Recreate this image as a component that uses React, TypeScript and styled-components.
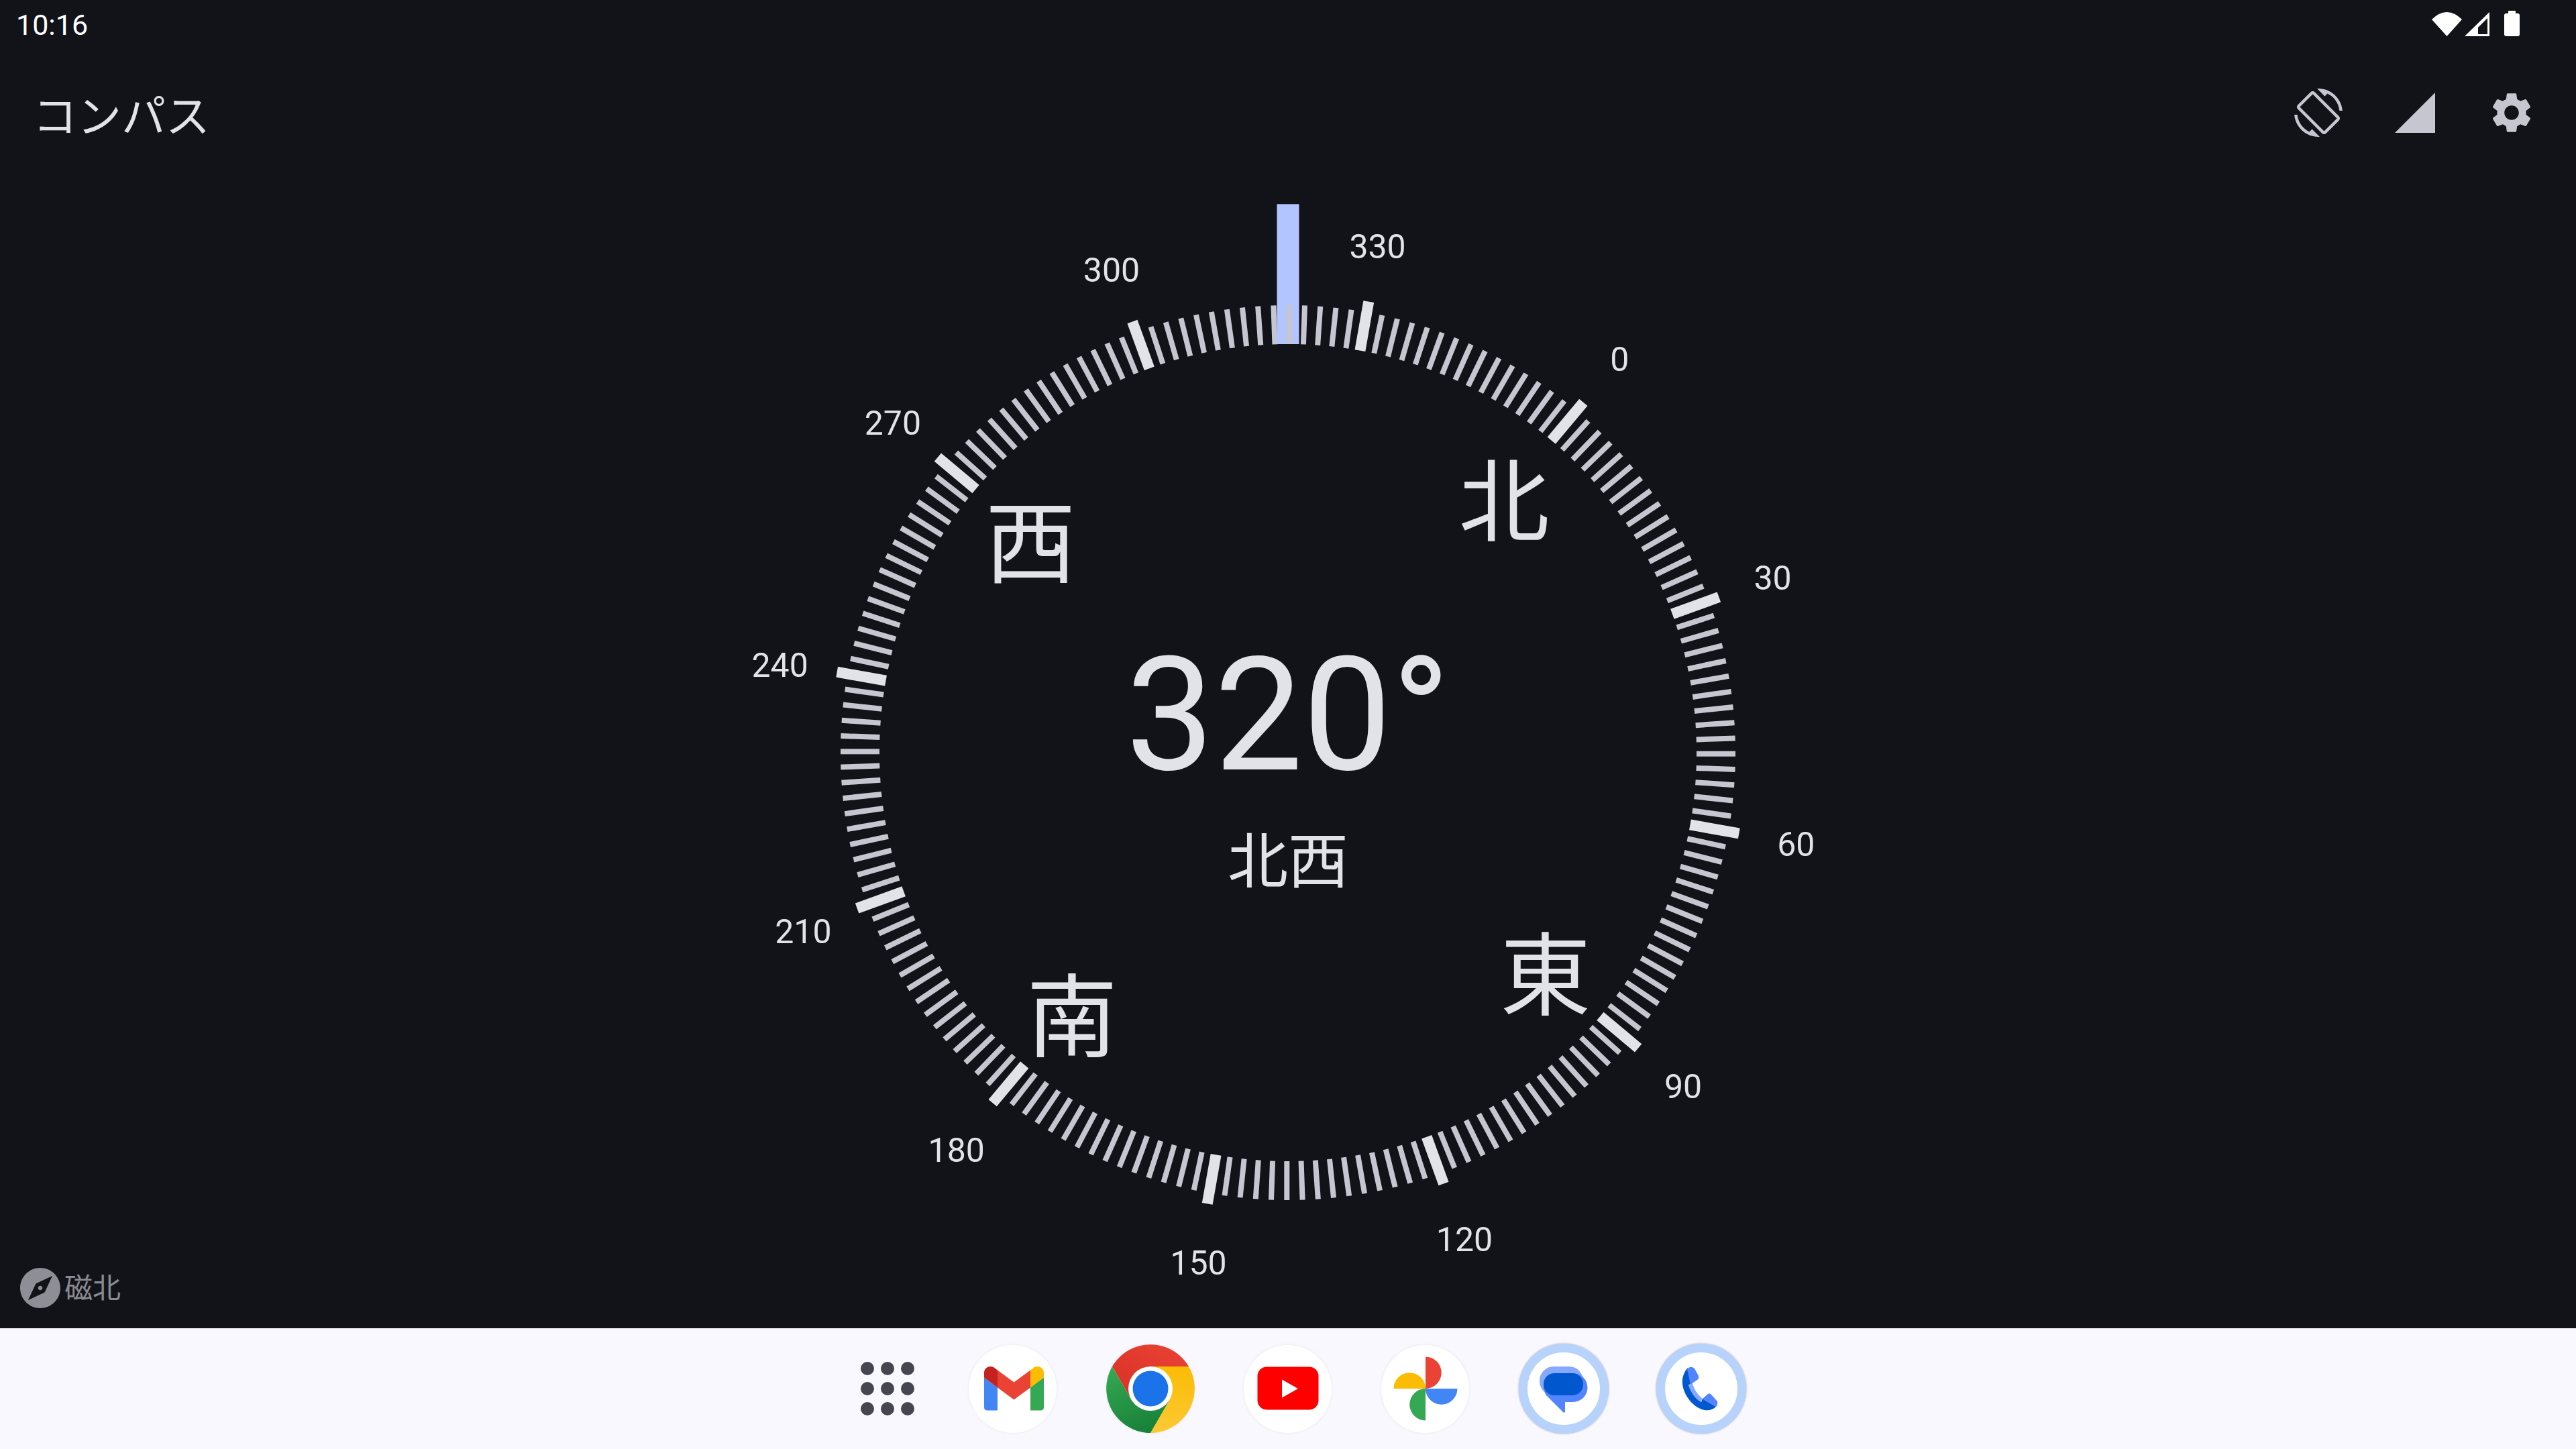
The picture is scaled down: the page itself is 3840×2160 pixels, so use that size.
import React from 'react';
import styled, { createGlobalStyle } from 'styled-components';

const HEADING = 320;
const DIAL_SIZE = 1692;
const CENTER = DIAL_SIZE / 2;
const INNER_R = 609;
const LABEL_R = 769;
const LABEL_DROP = 3.5;
const CARDINAL_R = 501;

const ticks = Array.from({ length: 180 }, (_, i) => i * 2);
const degreeMarks = Array.from({ length: 12 }, (_, i) => i * 30);
const cardinals = [
    { name: '北', deg: 0 },
    { name: '東', deg: 90 },
    { name: '南', deg: 180 },
    { name: '西', deg: 270 },
];

const polar = (deg: number, r: number) => {
    const rad = ((deg - HEADING) * Math.PI) / 180;
    return { x: CENTER + Math.sin(rad) * r, y: CENTER - Math.cos(rad) * r };
};

const Tick = ({ deg }: { deg: number }) => {
    const major = deg % 30 === 0;
    const length = major ? 74 : 58;
    const width = major ? 16 : 8;
    return (
        <rect
            x={CENTER + 1.7 - width / 2}
            y={CENTER - INNER_R - length}
            width={width}
            height={length}
            fill={major ? '#e2e2e9' : '#c5c6d0'}
            transform={`rotate(${deg - HEADING} ${CENTER} ${CENTER})`}
        />
    );
};

const DialDrawing = () => (
    <DialSvg viewBox={`0 0 ${DIAL_SIZE} ${DIAL_SIZE}`}>
        {ticks.filter((deg) => deg !== HEADING).map((deg) => (
            <Tick key={deg} deg={deg} />
        ))}
        <rect x={CENTER - 16.5} y={CENTER - 817.7} width={33} height={208.7} fill="#b3c5ff" />
        <Tick deg={HEADING} />
    </DialSvg>
);

const GmailLogo = () => (
    <svg width="131" height="131" viewBox="0 0 131 131">
        <path d="M22.5 49L42.5 64V98H27.5Q22.5 98 22.5 93Z" fill="#4285f4" />
        <path d="M22.5 49V42C22.5 33 33 30 38.5 35L42.5 38V64Z" fill="#c5221f" />
        <path d="M42.5 38L67 56L91.5 38V64L67 82L42.5 64Z" fill="#ea4335" />
        <path d="M91.5 38L95.5 35C101 30 111.5 33 111.5 42V49L91.5 64Z" fill="#fbbc04" />
        <path d="M91.5 64L111.5 49V93Q111.5 98 106.5 98H91.5Z" fill="#34a853" />
    </svg>
);

const ChromeLogo = () => (
    <svg width="132" height="132" viewBox="0 0 132 132">
        <defs>
            <linearGradient id="chromeRed" x1="0" y1="1" x2="1" y2="0">
                <stop offset="0" stopColor="#d93025" />
                <stop offset="1" stopColor="#ea4335" />
            </linearGradient>
            <linearGradient id="chromeGreen" x1="0.2" y1="0" x2="0.6" y2="1">
                <stop offset="0" stopColor="#34a853" />
                <stop offset="1" stopColor="#188038" />
            </linearGradient>
            <linearGradient id="chromeYellow" x1="0.5" y1="0" x2="0.5" y2="1">
                <stop offset="0" stopColor="#fbbc04" />
                <stop offset="1" stopColor="#fcc934" />
            </linearGradient>
        </defs>
        <path d="M9 33A66 66 0 0 1 123 33H66L37.4 82.5Z" fill="url(#chromeRed)" />
        <path d="M66 33H123A66 66 0 0 1 66 132L94.6 82.5Z" fill="url(#chromeYellow)" />
        <path d="M9 33L37.4 82.5H94.6L66 132A66 66 0 0 1 9 33Z" fill="url(#chromeGreen)" />
        <circle cx="66" cy="66" r="33" fill="#fff" />
        <circle cx="66" cy="66" r="26.5" fill="#1a73e8" />
    </svg>
);

const YoutubeLogo = () => (
    <svg width="131" height="131" viewBox="0 0 131 131">
        <rect x="20" y="33" width="91" height="64" rx="14" fill="#ff0000" />
        <path d="M56.5 52V79L80.5 65.5Z" fill="#fff" />
    </svg>
);

const PhotosLogo = () => (
    <svg width="131" height="131" viewBox="-65.5 -65.5 131 131">
        <path d="M0 0V-47.5A23.75 23.75 0 0 1 0 0Z" fill="#ea4335" />
        <path d="M0 0H-47.5A23.75 23.75 0 0 1 0 0Z" fill="#fbbc04" />
        <path d="M0 0V47.5A23.75 23.75 0 0 1 0 0Z" fill="#34a853" />
        <path d="M0 0H47.5A23.75 23.75 0 0 1 0 0Z" fill="#4285f4" />
    </svg>
);

const MessagesLogo = () => (
    <svg width="134" height="134" viewBox="0 0 134 134">
        <rect x="31" y="34" width="65" height="43" rx="21" fill="#86a9ff" />
        <path
            d="M37 65A21 21 0 0 1 58 44H81A21.5 21.5 0 0 1 81 87H69V102Q67 104 65 101L41 77Q37 71 37 65Z"
            fill="#5384ff"
        />
        <rect x="37" y="44" width="59" height="33" rx="16" fill="#0057ce" />
    </svg>
);

const PhoneLogo = () => (
    <svg width="134" height="134" viewBox="0 0 134 134">
        <path
            d="M47 36C41 42 38 52 39 60C41 78 56 96 72 99C79 100 85 98 89 94L69 82L67 87L48 62L53 58Z"
            fill="#0057ce"
        />
        <path d="M48 62L54 59C56 68 62 76 69 82L66 87C57 81 51 72 48 62Z" fill="#86a9ff" />
        <path d="M46 38Q51 32 57 37L63 48Q64 52 61 54L51 61Z" fill="#5384ff" />
        <path d="M69 82L77 75Q80 73 82 76L91 86Q92 91 89 94Z" fill="#5384ff" />
    </svg>
);

const App = () => {
    return (
        <>
            <GlobalStyle />
            <Screen>
                <StatusBar>
                    <Clock>10:16</Clock>
                    <StatusIcons>
                        <svg width="45" height="36" viewBox="0 0 45 36">
                            <path d="M0 11Q22.5 -11 45 11L22.5 36Z" fill="#fff" />
                        </svg>
                        <svg width="38" height="36" viewBox="0 0 38 36">
                            <path
                                fillRule="evenodd"
                                d="M0 36L37 0V36ZM20 23L34 9V33H20Z"
                                fill="#fff"
                            />
                        </svg>
                        <BatteryIcon width="23" height="38" viewBox="0 0 23 38">
                            <path
                                d="M6 4V1Q6 0 7 0H16Q17 0 17 1V4H20Q23 4 23 7V35Q23 38 20 38H3Q0 38 0 35V7Q0 4 3 4Z"
                                fill="#fff"
                            />
                        </BatteryIcon>
                    </StatusIcons>
                </StatusBar>

                <AppBar>
                    <Title>コンパス</Title>
                    <Actions>
                        <ActionIcon viewBox="0 0 24 24">
                            <path d="M16.48 2.52c3.27 1.55 5.61 4.72 5.97 8.48h1.5C23.44 4.84 18.29 0 12 0l-.66.03 3.81 3.81 1.33-1.32zm-6.25-.77c-.59-.59-1.54-.59-2.12 0L1.75 8.11c-.59.59-.59 1.54 0 2.12l12.02 12.02c.59.59 1.54.59 2.12 0l6.36-6.36c.59-.59.59-1.54 0-2.12L10.23 1.75zm4.6 19.44L2.81 9.17l6.36-6.36 12.02 12.02-6.36 6.36zm-7.31.29C4.25 19.94 1.91 16.76 1.55 13H.05C.56 19.16 5.71 24 12 24l.66-.03-3.81-3.81-1.33 1.32z" />
                        </ActionIcon>
                        <ActionIcon viewBox="0 0 24 24">
                            <path d="M2 22h20V2z" />
                        </ActionIcon>
                        <ActionIcon viewBox="0 0 24 24">
                            <path d="M19.14 12.94c.04-.3.06-.61.06-.94 0-.32-.02-.64-.07-.94l2.03-1.58c.18-.14.23-.41.12-.61l-1.92-3.32c-.12-.22-.37-.29-.59-.22l-2.39.96c-.5-.38-1.03-.7-1.62-.94l-.36-2.54c-.04-.24-.24-.41-.48-.41h-3.84c-.24 0-.43.17-.47.41l-.36 2.54c-.59.24-1.13.57-1.62.94l-2.39-.96c-.22-.08-.47 0-.59.22L2.74 8.87c-.12.21-.08.47.12.61l2.03 1.58c-.05.3-.09.63-.09.94s.02.64.07.94l-2.03 1.58c-.18.14-.23.41-.12.61l1.92 3.32c.12.22.37.29.59.22l2.39-.96c.5.38 1.03.7 1.62.94l.36 2.54c.05.24.24.41.48.41h3.84c.24 0 .44-.17.47-.41l.36-2.54c.59-.24 1.13-.56 1.62-.94l2.39.96c.22.08.47 0 .59-.22l1.92-3.32c.12-.22.07-.47-.12-.61l-2.01-1.58zM12 15.6c-1.98 0-3.6-1.62-3.6-3.6s1.62-3.6 3.6-3.6 3.6 1.62 3.6 3.6-1.62 3.6-3.6 3.6z" />
                        </ActionIcon>
                    </Actions>
                </AppBar>

                <Main>
                    <Dial>
                        <DialDrawing />
                        {degreeMarks.map((deg) => {
                            const pos = polar(deg, LABEL_R);
                            return (
                                <DegreeMark key={deg} style={{ left: pos.x, top: pos.y + LABEL_DROP }}>
                                    {deg}
                                </DegreeMark>
                            );
                        })}
                        {cardinals.map((c) => {
                            const pos = polar(c.deg, CARDINAL_R);
                            return (
                                <Cardinal key={c.name} style={{ left: pos.x, top: pos.y }}>
                                    {c.name}
                                </Cardinal>
                            );
                        })}
                        <Readout>
                            <Degrees>320°</Degrees>
                            <Direction>北西</Direction>
                        </Readout>
                    </Dial>
                    <MagneticNote>
                        <ExploreIcon viewBox="0 0 24 24">
                            <path d="M12 10.9c-.61 0-1.1.49-1.1 1.1s.49 1.1 1.1 1.1c.61 0 1.1-.49 1.1-1.1s-.49-1.1-1.1-1.1zM12 2C6.48 2 2 6.48 2 12s4.48 10 10 10 10-4.48 10-10S17.52 2 12 2zm2.19 12.19L6 18l3.81-8.19L18 6l-3.81 8.19z" />
                        </ExploreIcon>
                        <NoteText>磁北</NoteText>
                    </MagneticNote>
                </Main>

                <Dock>
                    <AppsButton>
                        {Array.from({ length: 9 }, (_, i) => (
                            <AppsDot key={i} />
                        ))}
                    </AppsButton>
                    <DockIcon><GmailLogo /></DockIcon>
                    <DockIcon><ChromeLogo /></DockIcon>
                    <DockIcon><YoutubeLogo /></DockIcon>
                    <DockIcon><PhotosLogo /></DockIcon>
                    <DockIcon $ringed><MessagesLogo /></DockIcon>
                    <DockIcon $ringed><PhoneLogo /></DockIcon>
                </Dock>
            </Screen>
        </>
    );
};

const GlobalStyle = createGlobalStyle`
  html, body {
    margin: 0;
    padding: 0;
    background: #121318;
  }
  * {
    box-sizing: border-box;
  }
`;

const Screen = styled.div`
  width: 3840px;
  height: 2160px;
  display: flex;
  flex-direction: column;
  background: #121318;
  font-family: Roboto, "Noto Sans CJK JP", sans-serif;
  overflow: hidden;
`;

const StatusBar = styled.div`
  height: 60px;
  flex: none;
  display: flex;
  align-items: flex-start;
  justify-content: space-between;
  padding: 0 84px 0 24px;
`;

const Clock = styled.div`
  font-size: 43px;
  line-height: 48px;
  color: #fff;
  margin-top: 13px;
`;

const StatusIcons = styled.div`
  display: flex;
  align-items: flex-end;
  gap: 4px;
  height: 54px;
`;

const BatteryIcon = styled.svg`
  margin-left: 17px;
`;

const AppBar = styled.div`
  height: 216px;
  flex: none;
  display: flex;
  align-items: center;
  justify-content: space-between;
  padding: 0 60px 0 49px;
`;

const Title = styled.h1`
  margin: 0;
  font-family: "Noto Sans CJK JP", sans-serif;
  font-size: 66px;
  font-weight: 400;
  color: #e2e2e9;
`;

const Actions = styled.div`
  display: flex;
  gap: 72px;
`;

const ActionIcon = styled.svg`
  width: 72px;
  height: 72px;
  fill: #c5c6d0;
`;

const Main = styled.main`
  flex: 1;
  position: relative;
  display: flex;
  justify-content: center;
  align-items: flex-start;
`;

const Dial = styled.div`
  position: relative;
  width: 1692px;
  height: 1692px;
  display: flex;
  align-items: center;
  justify-content: center;
`;

const DialSvg = styled.svg`
  position: absolute;
  inset: 0;
  width: 100%;
  height: 100%;
`;

const DegreeMark = styled.span`
  position: absolute;
  transform: translate(-50%, -50%);
  font-size: 50px;
  line-height: 1;
  color: #e2e2e9;
`;

const Cardinal = styled.span`
  position: absolute;
  transform: translate(-50%, -50%);
  font-family: "Noto Sans CJK JP", sans-serif;
  font-size: 135px;
  line-height: 1;
  color: #e2e2e9;
`;

const Readout = styled.div`
  position: relative;
  display: flex;
  flex-direction: column;
  align-items: center;
  gap: 5px;
  color: #e2e2e9;
`;

const Degrees = styled.div`
  font-size: 235px;
  line-height: 305px;
`;

const Direction = styled.div`
  font-family: "Noto Sans CJK JP", sans-serif;
  font-size: 90px;
  line-height: 106px;
`;

const MagneticNote = styled.div`
  position: absolute;
  left: 24px;
  bottom: 24px;
  display: flex;
  align-items: center;
  font-family: "Noto Sans CJK JP", sans-serif;
  font-size: 42px;
  color: #8a8b92;
`;

const NoteText = styled.span`
  margin-bottom: 8px;
`;

const ExploreIcon = styled.svg`
  width: 72px;
  height: 72px;
  fill: #8e8f96;
`;

const Dock = styled.footer`
  height: 180px;
  flex: none;
  display: flex;
  align-items: center;
  padding-left: 1283px;
  background: #faf8ff;
`;

const AppsButton = styled.div`
  width: 80px;
  display: grid;
  grid-template-columns: repeat(3, 20px);
  justify-content: space-between;
  row-gap: 10px;
  margin-right: 81px;
`;

const AppsDot = styled.span`
  width: 20px;
  height: 20px;
  border-radius: 50%;
  background: #45464f;
`;

const DockIcon = styled.div<{ $ringed?: boolean }>`
  position: relative;
  width: ${(p) => (p.$ringed ? '134px' : '131px')};
  height: ${(p) => (p.$ringed ? '134px' : '131px')};
  margin-right: ${(p) => (p.$ringed ? '71px' : '74px')};
  border-radius: 50%;
  background: #fff;
  flex: none;
  box-shadow: ${(p) => (p.$ringed ? '0 0 3px rgba(0, 0, 0, 0.35)' : '0 0 4px rgba(0, 0, 0, 0.08)')};
  ${(p) => (p.$ringed ? 'border: 13px solid #b8d3fb;' : '')}

  svg {
    position: absolute;
    left: 50%;
    top: 50%;
    transform: translate(-50%, -50%);
  }
`;

export default App;
